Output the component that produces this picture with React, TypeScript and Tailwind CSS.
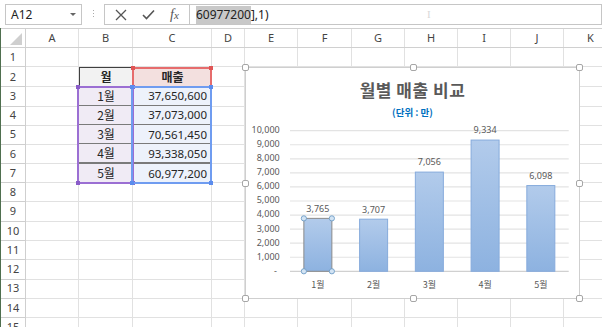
import React from 'react'

const rowCls = 'grid grid-cols-[25px_53px_54px_79px_33px_53px_54px_53px_53px_53px_53px_54px]'
const letters = ['', 'A', 'B', 'C', 'D', 'E', 'F', 'G', 'H', 'I', 'J', 'K']

const table: Record<number, [string, string]> = {
  2: ['월', '매출'],
  3: ['1월', '37,650,600'],
  4: ['2월', '37,073,000'],
  5: ['3월', '70,561,450'],
  6: ['4월', '93,338,050'],
  7: ['5월', '60,977,200'],
}

const values = [3765, 3707, 7056, 9334, 6098]
const yLabels = ['10,000', '9,000', '8,000', '7,000', '6,000', '5,000', '4,000', '3,000', '2,000', '1,000', '-']

const Cell: React.FC<{ r: number; c: number }> = ({ r, c }) => {
  const t = table[r]
  if (t && c === 2) {
    if (r === 2)
      return (
        <div className="flex items-center justify-center bg-[#f2f2f2] border border-[#404040] font-bold text-[#262626]">
          {t[0]}
        </div>
      )
    return (
      <div className={`flex items-center justify-center bg-[#f0ebf5] text-[#262626] ${r < 7 ? 'border-b-2 border-[#7a7a7a]' : ''}`}>
        {t[0]}
      </div>
    )
  }
  if (t && c === 3) {
    if (r === 2)
      return (
        <div className="flex items-center justify-center bg-[#f3e0df] font-bold text-[#262626]">{t[1]}</div>
      )
    return (
      <div className={`flex items-center justify-end pr-[5px] bg-[#edf2fb] text-[#262626] text-[11.5px] font-['Noto_Sans',sans-serif] ${r < 7 ? 'border-b-2 border-[#7a7a7a]' : ''}`}>
        {t[1]}
      </div>
    )
  }
  return <div className="border-r border-b border-[#e1e1e1]" />
}

const Frame: React.FC<{ cls: string; color: string }> = ({ cls, color }) => (
  <div className={`absolute pointer-events-none border-2 ${cls}`}>
    <span className={`absolute -left-[3px] -top-[3px] w-[4px] h-[4px] ${color}`} />
    <span className={`absolute -right-[3px] -top-[3px] w-[4px] h-[4px] ${color}`} />
    <span className={`absolute -left-[3px] -bottom-[3px] w-[4px] h-[4px] ${color}`} />
    <span className={`absolute -right-[3px] -bottom-[3px] w-[4px] h-[4px] ${color}`} />
  </div>
)

const Handle: React.FC<{ cls: string }> = ({ cls }) => (
  <span className={`absolute w-[7px] h-[7px] rounded-[2px] bg-white border border-[#a6a6a6] ${cls}`} />
)

const Chart: React.FC = () => {
  const x0 = 44
  const x1 = 322.7
  const yTop = 62.7
  const yBase = 203.3
  const step = (yBase - yTop) / 10
  const cat = (x1 - x0) / 5
  const bw = 28
  return (
    <div className="absolute left-[244px] top-[39px] w-[335px] h-[232px] bg-white border border-[#cfcfcf]">
      <div className="flex flex-col items-center pt-[10px]">
        <div className="text-[17px] leading-[24px] font-bold text-[#595959] tracking-[0.5px]">월별 매출 비교</div>
        <div className="text-[9.5px] leading-[14px] font-bold text-[#0070c0] mt-[3px]">(단위 : 만)</div>
      </div>
      <svg className="absolute left-0 top-0" width="335" height="232" viewBox="0 0 335 232">
        <defs>
          <linearGradient id="bar" x1="0" y1="0" x2="0" y2="1">
            <stop offset="0" stopColor="#b2cbeb" />
            <stop offset="1" stopColor="#8db2e0" />
          </linearGradient>
        </defs>
        {yLabels.map((l, i) => (
          <g key={l}>
            <line x1={x0} x2={x1} y1={yTop + i * step} y2={yTop + i * step} stroke={i === 10 ? '#d0d0d0' : '#e3e3e3'} strokeWidth="1.2" />
            <text x={i === 10 ? 31 : 33.7} y={yTop + i * step} textAnchor="end" dominantBaseline="middle" fontSize="9" fill="#595959" fontFamily="'Noto Sans', sans-serif">
              {l}
            </text>
          </g>
        ))}
        {values.map((v, i) => {
          const h = (v / 10000) * (yBase - yTop)
          const bx = x0 + i * cat + (cat - bw) / 2
          const by = yBase - h
          return (
            <g key={v}>
              <rect x={bx} y={by} width={bw} height={h} fill="url(#bar)" stroke={i === 0 ? '#8a8a8a' : '#86abdc'} strokeWidth="1" />
              <text x={bx + bw / 2} y={by - 9} textAnchor="middle" dominantBaseline="middle" fontSize="9" fill="#595959" fontFamily="'Noto Sans', sans-serif">
                {v.toLocaleString('en-US')}
              </text>
              <text x={bx + bw / 2} y={218} textAnchor="middle" dominantBaseline="middle" fontSize="9" fill="#595959" fontFamily="'Noto Sans CJK KR', sans-serif">
                {i + 1}월
              </text>
              {i === 0 &&
                [
                  [bx, by],
                  [bx + bw, by],
                  [bx, yBase],
                  [bx + bw, yBase],
                ].map(([cx, cy], k) => (
                  <circle key={k} cx={cx} cy={cy} r="2.6" fill="#d3e4f4" stroke="#6d9cc6" strokeWidth="0.9" />
                ))}
            </g>
          )
        })}
      </svg>
      <Handle cls="-left-[4px] -top-[4px]" />
      <Handle cls="left-[164px] -top-[4px]" />
      <Handle cls="-right-[4px] -top-[4px]" />
      <Handle cls="-left-[4px] top-[112px]" />
      <Handle cls="-right-[4px] top-[112px]" />
      <Handle cls="-left-[4px] -bottom-[4px]" />
      <Handle cls="left-[164px] -bottom-[4px]" />
      <Handle cls="-right-[4px] -bottom-[4px]" />
    </div>
  )
}

export default function App() {
  const rows = Array.from({ length: 15 }, (_, i) => i + 1)
  return (
    <div className="w-[602px] h-[327px] overflow-hidden bg-white text-[#333] font-['Noto_Sans_CJK_KR','Noto_Sans',sans-serif] text-[12px]">
      {/* formula bar */}
      <div className="flex items-start h-[28px] pt-[4px] pl-[5px]">
        <div className="relative flex items-center w-[77px] h-[21px] border border-[#c6c6c6] pl-[5px] text-[12px] text-[#222] font-['Noto_Sans',sans-serif]">
          A12
          <span className="absolute right-[5px] top-[8px] w-0 h-0 border-l-[3px] border-r-[3px] border-t-[3px] border-l-transparent border-r-transparent border-t-[#666]" />
        </div>
        <div className="flex flex-col gap-[2px] w-[22px] items-center pt-[6px]">
          <span className="w-[1px] h-[1px] bg-[#aaa]" />
          <span className="w-[1px] h-[1px] bg-[#aaa]" />
          <span className="w-[1px] h-[1px] bg-[#aaa]" />
        </div>
        <div className="flex items-center w-[85px] h-[21px] border border-[#c6c6c6] border-r-0 text-[#555]">
          <svg className="ml-[10px]" width="12" height="12" viewBox="0 0 12 12">
            <path d="M1 1 L11 11 M11 1 L1 11" stroke="#555" strokeWidth="1.3" />
          </svg>
          <svg className="ml-[15px]" width="13" height="11" viewBox="0 0 13 11">
            <path d="M1 6 L4.5 9.5 L12 1.5" stroke="#555" strokeWidth="1.6" fill="none" />
          </svg>
          <span className="ml-[15px] italic font-['Liberation_Serif',serif] text-[14px] text-[#555] leading-none">
            f<span className="text-[11px]">x</span>
          </span>
        </div>
        <div className="relative flex items-center flex-1 h-[21px] border border-[#c6c6c6] pl-[6px] text-[12px] text-[#222] font-['Noto_Sans',sans-serif]">
          <span className="bg-[#c8c8c8]">60977200</span>
          <span>],1)</span>
          <span className="absolute left-[237px] top-[4px] text-[11px] text-[#d8d8d8] font-['Liberation_Serif',serif] leading-none">I</span>
        </div>
      </div>

      {/* sheet */}
      <div className="relative border-l border-[#4f6f4f]">
        <div className={`${rowCls} h-[20px] border-t border-b border-[#d0d0d0] text-[11px] text-[#444] font-['Noto_Sans',sans-serif]`}>
          {letters.map((l, i) =>
            i === 0 ? (
              <div key="corner" className="relative border-r border-[#d0d0d0]">
                <span className="absolute right-[3px] bottom-[2px] w-0 h-0 border-b-[12px] border-l-[12px] border-b-[#cfcfcf] border-l-transparent" />
              </div>
            ) : (
              <div key={l} className="flex items-center justify-center border-r border-[#e1e1e1]">
                {l}
              </div>
            )
          )}
        </div>
        {rows.map((r) => (
          <div key={r} className={`${rowCls} h-[19.3px]`}>
            <div className="flex items-center justify-center border-r border-b border-[#cfcfcf] text-[11px] text-[#444] font-['Noto_Sans',sans-serif]">
              {r}
            </div>
            {letters.slice(1).map((l, i) => (
              <Cell key={l} r={r} c={i + 1} />
            ))}
          </div>
        ))}

        {/* range highlight frames */}
        <Frame cls="left-[131px] top-[39px] w-[80px] h-[21px] border-[#e66c6c]" color="bg-[#e05555]" />
        <Frame cls="left-[76px] top-[58px] w-[57px] h-[98px] border-[#9b6fd3]" color="bg-[#8a5cc9]" />
        <Frame cls="left-[130px] top-[58px] w-[81px] h-[98px] border-[#6f9cf0]" color="bg-[#5b8ced]" />

        <Chart />
      </div>
    </div>
  )
}
